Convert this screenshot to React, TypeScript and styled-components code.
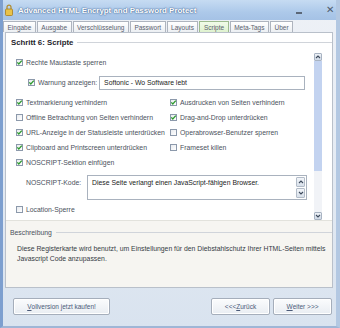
import styled, { createGlobalStyle } from "styled-components";

const GlobalStyle = createGlobalStyle`
  html, body { margin: 0; padding: 0; }
  body {
    font-family: "Liberation Sans", Arial, sans-serif;
    font-size: 6.85px;
    color: #4a515c;
    background: #ffffff;
  }
  * { box-sizing: border-box; }
`;

const tabs = [
  "Eingabe",
  "Ausgabe",
  "Verschlüsselung",
  "Passwort",
  "Layouts",
  "Scripte",
  "Meta-Tags",
  "Über",
];

const Lock = () => (
  <svg width="8" height="12" viewBox="0 0 8 12">
    <path d="M2 5 V3.2 A2 2 0 0 1 6 3.2 V5" fill="none" stroke="#b08a2a" strokeWidth="1.2" />
    <rect x="0.5" y="5" width="7" height="6.5" rx="1" fill="#e8c24a" stroke="#a97f1c" strokeWidth="0.8" />
  </svg>
);

const Check = () => (
  <svg width="7" height="7" viewBox="0 0 7 7">
    <path d="M1.3 3.4 L2.8 5 L5.8 1.6" fill="none" stroke="#2d9a2d" strokeWidth="1.3" />
  </svg>
);

type CheckProps = { checked?: boolean; label: string };

const Option: React.FC<CheckProps> = ({ checked, label }) => (
  <OptionRow>
    <Box>{checked ? <Check /> : null}</Box>
    <span>{label}</span>
  </OptionRow>
);

const Caret = ({ down }: { down?: boolean }) => (
  <svg width="6" height="4" viewBox="0 0 6 4">
    <path
      d={down ? "M1 1 L3 3 L5 1" : "M1 3 L3 1 L5 3"}
      fill="none"
      stroke="#3d4a5c"
      strokeWidth="1.1"
    />
  </svg>
);

const App = () => {
  return (
    <>
      <GlobalStyle />
      <Window>
        <TitleBar>
          <Lock />
          <Title>Advanced HTML Encrypt and Password Protect</Title>
          <Minimize />
          <Close>✕</Close>
        </TitleBar>
        <TabStrip>
          {tabs.map((t) => (
            <Tab key={t} active={t === "Scripte"}>
              {t}
            </Tab>
          ))}
        </TabStrip>
        <Sheet>
          <GroupHeader>
            <StepTitle>Schritt 6: Scripte</StepTitle>
            <Rule />
          </GroupHeader>
          <ScrollArea>
            <Options>
              <Option checked label="Rechte Maustaste sperren" />
              <WarnRow>
                <Option checked label="Warnung anzeigen:" />
                <Field>Softonic - Wo Software lebt</Field>
              </WarnRow>
              <Pairs>
                <Option checked label="Textmarkierung verhindern" />
                <Option checked label="Ausdrucken von Seiten verhindern" />
                <Option label="Offline Betrachtung von Seiten verhindern" />
                <Option checked label="Drag-and-Drop unterdrücken" />
                <Option checked label="URL-Anzeige in der Statusleiste unterdrücken" />
                <Option label="Operabrowser-Benutzer sperren" />
                <Option checked label="Clipboard and Printscreen unterdrücken" />
                <Option label="Frameset killen" />
              </Pairs>
              <Option checked label="NOSCRIPT-Sektion einfügen" />
              <CodeRow>
                <CodeLabel>NOSCRIPT-Kode:</CodeLabel>
                <TextArea>
                  <span>Diese Seite verlangt einen JavaScript-fähigen Browser.</span>
                  <Spinner>
                    <SpinButton>
                      <Caret />
                    </SpinButton>
                    <SpinButton>
                      <Caret down />
                    </SpinButton>
                  </Spinner>
                </TextArea>
              </CodeRow>
              <LastRow>
                <Option label="Location-Sperre" />
              </LastRow>
            </Options>
            <ScrollBar>
              <ScrollButton>
                <Caret />
              </ScrollButton>
              <Thumb />
              <Track />
              <ScrollButton>
                <Caret down />
              </ScrollButton>
            </ScrollBar>
          </ScrollArea>
          <Description>
            <GroupHeader>
              <DescTitle>Beschreibung</DescTitle>
              <Rule />
            </GroupHeader>
            <DescText>
              Diese Registerkarte wird benutzt, um Einstellungen für den
              Diebstahlschutz Ihrer HTML-Seiten mittels
              <br />
              Javascript Code anzupassen.
            </DescText>
          </Description>
        </Sheet>
        <Footer>
          <Button width={97}>
            <u>V</u>ollversion jetzt kaufen!
          </Button>
          <Spacer />
          <Button width={59}>
            &lt;&lt;&lt; <u>Z</u>urück
          </Button>
          <Button width={59}>
            <u>W</u>eiter &gt;&gt;&gt;
          </Button>
        </Footer>
      </Window>
    </>
  );
};

export default App;

const Window = styled.div`
  width: 340px;
  height: 328px;
  display: flex;
  flex-direction: column;
  background: linear-gradient(#eef1f6 0%, #e9eef5 30%, #d9e3ef 100%);
  border-left: 3px solid #7d9fcf;
  border-right: 4px solid #b3c8e2;
  border-bottom: 2px solid #9fb6d6;
  overflow: hidden;
`;

const TitleBar = styled.div`
  height: 20px;
  flex: none;
  display: flex;
  align-items: center;
  margin-left: -3px;
  margin-right: -4px;
  padding: 0 5px 0 5px;
  background: linear-gradient(#c6dbf2, #adc9ea 60%, #a5c2e6);
`;

const Title = styled.div`
  margin-left: 5px;
  font-weight: 700;
  font-size: 7.9px;
  color: #ffffff;
  text-shadow: 0 0 2px #3c5f8e, 0 0 1px #3c5f8e;
  flex: 1;
`;

const Minimize = styled.div`
  width: 6px;
  height: 2px;
  background: #5b6778;
  margin-top: 6px;
  margin-right: 24px;
`;

const Close = styled.div`
  font-size: 10px;
  color: #505c6c;
  margin-right: 1px;
  margin-top: -2px;
`;

const TabStrip = styled.div`
  height: 12px;
  flex: none;
  display: flex;
  gap: 1px;
  align-items: flex-end;
`;

const Tab = styled.div<{ active?: boolean }>`
  height: 11px;
  padding: 0 3.5px;
  display: flex;
  align-items: center;
  font-size: 6.5px;
  color: #5a626e;
  border: 1px solid ${({ active }) => (active ? "#9dbb8e" : "#aeb4be")};
  border-bottom: none;
  background: ${({ active }) =>
    active ? "linear-gradient(#f1fbe9, #dff2cf)" : "linear-gradient(#ffffff, #eceff3)"};
`;

const Sheet = styled.div`
  height: 256px;
  flex: none;
  margin: 0 3px 0 2px;
  background: #ffffff;
  border: 1px solid #b9c0ca;
  display: flex;
  flex-direction: column;
`;

const GroupHeader = styled.div`
  display: flex;
  align-items: center;
  gap: 4px;
`;

const StepTitle = styled.div`
  font-weight: 700;
  font-size: 7.8px;
  color: #1e232b;
  margin: 5px 0 0 5px;
`;

const Rule = styled.div`
  flex: 1;
  height: 1px;
  background: #d0d4da;
  margin-top: 5px;
`;

const ScrollArea = styled.div`
  display: flex;
  margin-top: 6px;
  height: 167px;
`;

const Options = styled.div`
  flex: 1;
  display: flex;
  flex-direction: column;
  padding: 2px 0 0 10px;
`;

const OptionRow = styled.div`
  height: 15px;
  display: flex;
  align-items: center;
  gap: 3px;
  white-space: nowrap;
`;

const Box = styled.span`
  width: 7px;
  height: 7px;
  flex: none;
  display: flex;
  border: 1px solid #8c99ab;
  background: linear-gradient(135deg, #e8ebef, #ffffff);
  & svg {
    margin: -1px;
  }
`;

const WarnRow = styled.div`
  display: flex;
  align-items: center;
  margin: 5px 0 5px 12px;
  gap: 2px;
`;

const Field = styled.div`
  width: 206px;
  height: 14px;
  border: 1px solid #a9b2be;
  display: flex;
  align-items: center;
  padding-left: 4px;
  color: #222;
  background: #ffffff;
`;

const Pairs = styled.div`
  display: grid;
  grid-template-columns: 154px 1fr;
`;

const CodeRow = styled.div`
  display: flex;
  margin-top: 5px;
  padding-left: 10px;
`;

const CodeLabel = styled.div`
  width: 61px;
  padding-top: 4px;
`;

const TextArea = styled.div`
  width: 220px;
  height: 25px;
  border: 1px solid #a9b2be;
  display: flex;
  justify-content: space-between;
  padding: 3px 1px 1px 4px;
  color: #222;
`;

const Spinner = styled.div`
  display: flex;
  flex-direction: column;
  gap: 1px;
  margin-top: -2px;
`;

const SpinButton = styled.div`
  width: 9px;
  height: 10px;
  display: flex;
  align-items: center;
  justify-content: center;
  border: 1px solid #b3bcc8;
  border-radius: 1px;
  background: linear-gradient(#f2f5f9, #d8e0ea);
`;

const LastRow = styled.div`
  margin-top: 2px;
`;

const ScrollBar = styled.div`
  width: 8px;
  margin-right: 10px;
  display: flex;
  flex-direction: column;
`;

const ScrollButton = styled.div`
  height: 8px;
  flex: none;
  display: flex;
  align-items: center;
  justify-content: center;
  border: 1px solid #a8b3c2;
  border-radius: 1px;
  background: linear-gradient(#eef2f7, #cfd9e6);
`;

const Thumb = styled.div`
  height: 110px;
  flex: none;
  background: #c3d3f0;
`;

const Track = styled.div`
  flex: 1;
  background: #f1f3f7;
`;

const Description = styled.div`
  flex: 1;
  background: #f6f5f1;
  border-top: 1px solid #e2e2dc;
  padding-top: 3px;
`;

const DescTitle = styled.div`
  margin: 0 0 0 4px;
  padding-top: 5px;
`;

const DescText = styled.div`
  margin: 8px 0 0 11px;
  line-height: 10px;
  color: #353b44;
`;

const Footer = styled.div`
  flex: 1;
  display: flex;
  align-items: center;
  gap: 3px;
  padding: 0 4px 2px 10px;
`;

const Spacer = styled.div`
  flex: 1;
`;

const Button = styled.div<{ width: number }>`
  width: ${({ width }) => width}px;
  height: 17px;
  display: flex;
  align-items: center;
  justify-content: center;
  font-size: 6.5px;
  color: #4a5a78;
  border: 1px solid #a5aebb;
  border-radius: 2px;
  background: linear-gradient(#fbfcfd, #e9edf2);
  box-shadow: inset 0 0 0 1px #ffffff;
`;
